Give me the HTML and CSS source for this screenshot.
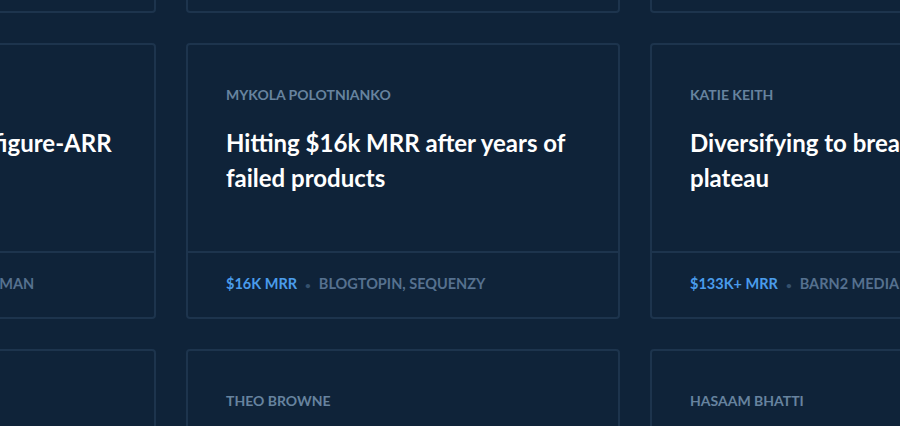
FILE: index.html
```html
<!DOCTYPE html>
<html lang="en">
<head>
    <meta charset="UTF-8">
    <meta name="viewport" content="width=device-width, initial-scale=1.0">
    <title>Founder stories</title>
    <link rel="stylesheet" href="styles.css">
</head>
<body>
    <div class="page">
        <div class="story-grid">
            <!-- row 1 -->
            <a class="story-card" href="#">
                <div class="story-body">
                    <div class="story-author">Arvid Kahl</div>
                    <h2 class="story-title">Selling a bootstrapped SaaS after two years</h2>
                </div>
                <div class="story-meta"><span class="story-revenue">$55K MRR</span><span class="dot">•</span><span class="story-company">FeedbackPanda</span></div>
            </a>
            <a class="story-card" href="#">
                <div class="story-body">
                    <div class="story-author">Courtland Allen</div>
                    <h2 class="story-title">Growing a community of indie founders</h2>
                </div>
                <div class="story-meta"><span class="story-revenue">$20K MRR</span><span class="dot">•</span><span class="story-company">Indie Hackers</span></div>
            </a>
            <a class="story-card" href="#">
                <div class="story-body">
                    <div class="story-author">Pieter Levels</div>
                    <h2 class="story-title">Shipping twelve startups in twelve months</h2>
                </div>
                <div class="story-meta"><span class="story-revenue">$210K MRR</span><span class="dot">•</span><span class="story-company">Nomad List</span></div>
            </a>

            <!-- row 2 -->
            <a class="story-card" href="#">
                <div class="story-body">
                    <div class="story-author">Rob Walling</div>
                    <h2 class="story-title">Scaling up to a seven-figure-ARR business</h2>
                </div>
                <div class="story-meta"><span class="story-revenue">$1M ARR</span><span class="dot">•</span><span class="story-company">Drip, TinySeed, Hartman</span></div>
            </a>
            <a class="story-card" href="#">
                <div class="story-body">
                    <div class="story-author">Mykola Polotnianko</div>
                    <h2 class="story-title">Hitting $16k MRR after years of failed products</h2>
                </div>
                <div class="story-meta"><span class="story-revenue">$16K MRR</span><span class="dot">•</span><span class="story-company">Blogtopin, Sequenzy</span></div>
            </a>
            <a class="story-card" href="#">
                <div class="story-body">
                    <div class="story-author">Katie Keith</div>
                    <h2 class="story-title">Diversifying to break through a plateau</h2>
                </div>
                <div class="story-meta"><span class="story-revenue">$133K+ MRR</span><span class="dot">•</span><span class="story-company">Barn2 Media</span></div>
            </a>

            <!-- row 3 -->
            <a class="story-card" href="#">
                <div class="story-body">
                    <div class="story-author">Danny Postma</div>
                    <h2 class="story-title">Building AI tools as a solo founder</h2>
                </div>
                <div class="story-meta"><span class="story-revenue">$30K MRR</span><span class="dot">•</span><span class="story-company">HeadshotPro</span></div>
            </a>
            <a class="story-card" href="#">
                <div class="story-body">
                    <div class="story-author">Theo Browne</div>
                    <h2 class="story-title">Turning an open source stack into a business</h2>
                </div>
                <div class="story-meta"><span class="story-revenue">$40K MRR</span><span class="dot">•</span><span class="story-company">Ping, UploadThing</span></div>
            </a>
            <a class="story-card" href="#">
                <div class="story-body">
                    <div class="story-author">Hasaam Bhatti</div>
                    <h2 class="story-title">Growing a productized service with no ads</h2>
                </div>
                <div class="story-meta"><span class="story-revenue">$25K MRR</span><span class="dot">•</span><span class="story-company">Upscribe</span></div>
            </a>
        </div>
    </div>
</body>
</html>
```

FILE: styles.css
```css
* {
    margin: 0;
    padding: 0;
    box-sizing: border-box;
}

body {
    font-family: 'Lato', 'Liberation Sans', sans-serif;
    background: #0f2339;
    color: #ffffff;
}

.page {
    height: 426px;
    overflow: hidden;
}

.story-grid {
    display: grid;
    grid-template-columns: repeat(3, 434px);
    grid-auto-rows: 276px;
    gap: 30px;
    margin: -263px 0 0 -278px;
}

.story-card {
    display: flex;
    flex-direction: column;
    border: 2px solid #1d344d;
    border-radius: 4px;
    text-decoration: none;
    color: inherit;
    overflow: hidden;
}

.story-body {
    flex: 1;
    padding: 40px 38px 0;
}

.story-author {
    font-size: 14px;
    line-height: 20px;
    font-weight: 700;
    text-transform: uppercase;
    color: #67839f;
    white-space: nowrap;
}

.story-title {
    margin-top: 20px;
    font-size: 24px;
    line-height: 35px;
    font-weight: 700;
    color: #ffffff;
}

.story-meta {
    border-top: 2px solid #1d344d;
    padding: 21px 38px 22px;
    font-size: 14.5px;
    line-height: 20px;
    font-weight: 700;
    text-transform: uppercase;
    white-space: nowrap;
}

.story-revenue {
    color: #4a9ceb;
}

.dot {
    color: #34506d;
    margin: 0 8px;
    font-size: 10px;
}

.story-company {
    color: #56718f;
}
```
